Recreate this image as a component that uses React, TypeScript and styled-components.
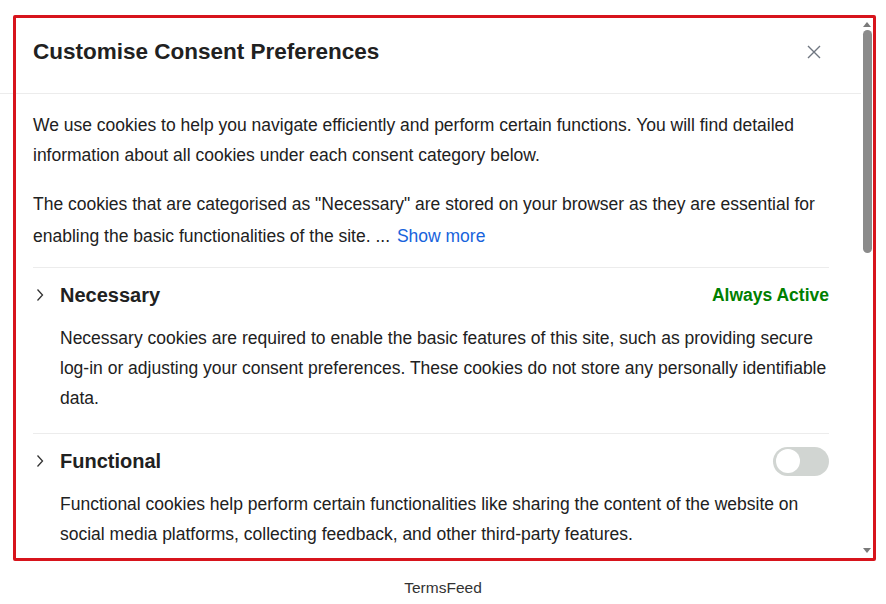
import React from "react";
import styled, { createGlobalStyle } from "styled-components";

const GlobalStyle = createGlobalStyle`
  html, body { margin: 0; padding: 0; background: #ffffff; }
  body { font-family: "Liberation Sans", Arial, sans-serif; color: #212121; }
  * { box-sizing: border-box; }
`;

const Page = styled.div`
  position: relative;
  width: 886px;
  height: 604px;
  display: flex;
  flex-direction: column;
  overflow: hidden;
`;

const ModalFrame = styled.div`
  margin-top: 18px;
  width: 873px;
  height: 540px;
  display: flex;
  background: #ffffff;
`;

const ModalContent = styled.div`
  flex: 1;
  min-width: 0;
  overflow: hidden;
  display: flex;
  flex-direction: column;
`;

const Header = styled.div`
  height: 76px;
  flex-shrink: 0;
  display: flex;
  align-items: flex-start;
  justify-content: space-between;
  padding: 21px 34px 0 33px;
  border-bottom: 1px solid #ececec;
`;

const Title = styled.h2`
  margin: 0;
  font-size: 22.5px;
  line-height: 26px;
  font-weight: 700;
  color: #212121;
`;

const CloseButton = styled.button`
  width: 26px;
  height: 26px;
  padding: 0;
  border: none;
  background: transparent;
  display: flex;
  align-items: center;
  justify-content: center;
`;

const Body = styled.div`
  padding: 16px 32px 0 33px;
`;

const Paragraph = styled.p<{ $lh?: number; $mb?: number }>`
  margin: 0 0 ${(p) => p.$mb ?? 18}px;
  font-size: 17.5px;
  line-height: ${(p) => p.$lh ?? 30}px;
  color: #212121;
`;

const ShowMore = styled.button`
  display: inline;
  border: none;
  background: transparent;
  padding: 0 0 0 2px;
  font: inherit;
  line-height: inherit;
  color: #1863dc;
`;

const Category = styled.div<{ $pb: number }>`
  border-top: 1px solid #ececec;
  padding: 15px 0 ${(p) => p.$pb}px;
`;

const CategoryHead = styled.div`
  height: 24px;
  display: flex;
  align-items: center;
`;

const ChevronBox = styled.span`
  width: 27px;
  flex-shrink: 0;
  display: flex;
  align-items: center;
  padding-left: 3px;
`;

const CategoryTitle = styled.h3`
  margin: 0;
  flex: 1;
  font-size: 20px;
  line-height: 24px;
  font-weight: 700;
  color: #212121;
`;

const AlwaysActive = styled.span`
  font-size: 17.5px;
  font-weight: 700;
  color: #008000;
`;

const Toggle = styled.span`
  width: 56px;
  height: 29px;
  border-radius: 15px;
  background: #d1d5d2;
  display: flex;
  align-items: center;
  padding-left: 3px;
  flex-shrink: 0;
`;

const Knob = styled.span`
  width: 24px;
  height: 24px;
  border-radius: 50%;
  background: #ffffff;
`;

const Description = styled.p`
  margin: 16px 0 0 27px;
  font-size: 17.5px;
  line-height: 30px;
  color: #212121;
`;

const ScrollTrack = styled.div`
  width: 12px;
  flex-shrink: 0;
  display: flex;
  flex-direction: column;
  align-items: center;
  background: #ffffff;
`;

const ArrowBox = styled.div`
  height: 12px;
  display: flex;
  align-items: center;
  justify-content: center;
`;

const BottomArrowBox = styled(ArrowBox)`
  margin-top: auto;
  margin-bottom: 2px;
`;

const Thumb = styled.div`
  width: 9px;
  height: 223px;
  border-radius: 5px;
  background: #8b8b8b;
`;

const Highlight = styled.div`
  position: absolute;
  top: 15px;
  left: 13px;
  width: 863px;
  height: 546px;
  border: 3px solid #d7141c;
  border-radius: 2px;
  pointer-events: none;
`;

const Footer = styled.div`
  margin-top: 20px;
  text-align: center;
  font-size: 15.5px;
  line-height: 20px;
  color: #333333;
`;

const Chevron = () => (
  <svg width="8" height="14" viewBox="0 0 8 14" fill="none">
    <path d="M1.5 1.5 L6.5 7 L1.5 12.5" stroke="#333" strokeWidth="1.3" />
  </svg>
);

const CloseIcon = () => (
  <svg width="14" height="14" viewBox="0 0 14 14" fill="none">
    <path d="M1 1 L13 13 M13 1 L1 13" stroke="#6f7680" strokeWidth="1.4" />
  </svg>
);

const Triangle = ({ down }: { down?: boolean }) => (
  <svg width="8" height="5" viewBox="0 0 8 5">
    <path d={down ? "M0 0 L8 0 L4 5 Z" : "M0 5 L8 5 L4 0 Z"} fill="#7a7a7a" />
  </svg>
);

export default function App() {
  return (
    <Page>
      <GlobalStyle />
      <ModalFrame>
        <ModalContent>
          <Header>
            <Title>Customise Consent Preferences</Title>
            <CloseButton aria-label="Close">
              <CloseIcon />
            </CloseButton>
          </Header>
          <Body>
            <Paragraph>
              We use cookies to help you navigate efficiently and perform certain functions. You will find detailed
              information about all cookies under each consent category below.
            </Paragraph>
            <Paragraph $lh={32} $mb={15}>
              The cookies that are categorised as "Necessary" are stored on your browser as they are essential for
              enabling the basic functionalities of the site. ...{" "}
              <ShowMore>Show more</ShowMore>
            </Paragraph>
            <Category $pb={20}>
              <CategoryHead>
                <ChevronBox>
                  <Chevron />
                </ChevronBox>
                <CategoryTitle>Necessary</CategoryTitle>
                <AlwaysActive>Always Active</AlwaysActive>
              </CategoryHead>
              <Description>
                Necessary cookies are required to enable the basic features of this site, such as providing secure
                log-in or adjusting your consent preferences. These cookies do not store any personally identifiable
                data.
              </Description>
            </Category>
            <Category $pb={20}>
              <CategoryHead>
                <ChevronBox>
                  <Chevron />
                </ChevronBox>
                <CategoryTitle>Functional</CategoryTitle>
                <Toggle>
                  <Knob />
                </Toggle>
              </CategoryHead>
              <Description>
                Functional cookies help perform certain functionalities like sharing the content of the website on
                social media platforms, collecting feedback, and other third-party features.
              </Description>
            </Category>
          </Body>
        </ModalContent>
        <ScrollTrack>
          <ArrowBox>
            <Triangle />
          </ArrowBox>
          <Thumb />
          <BottomArrowBox>
            <Triangle down />
          </BottomArrowBox>
        </ScrollTrack>
      </ModalFrame>
      <Footer>TermsFeed</Footer>
      <Highlight />
    </Page>
  );
}
